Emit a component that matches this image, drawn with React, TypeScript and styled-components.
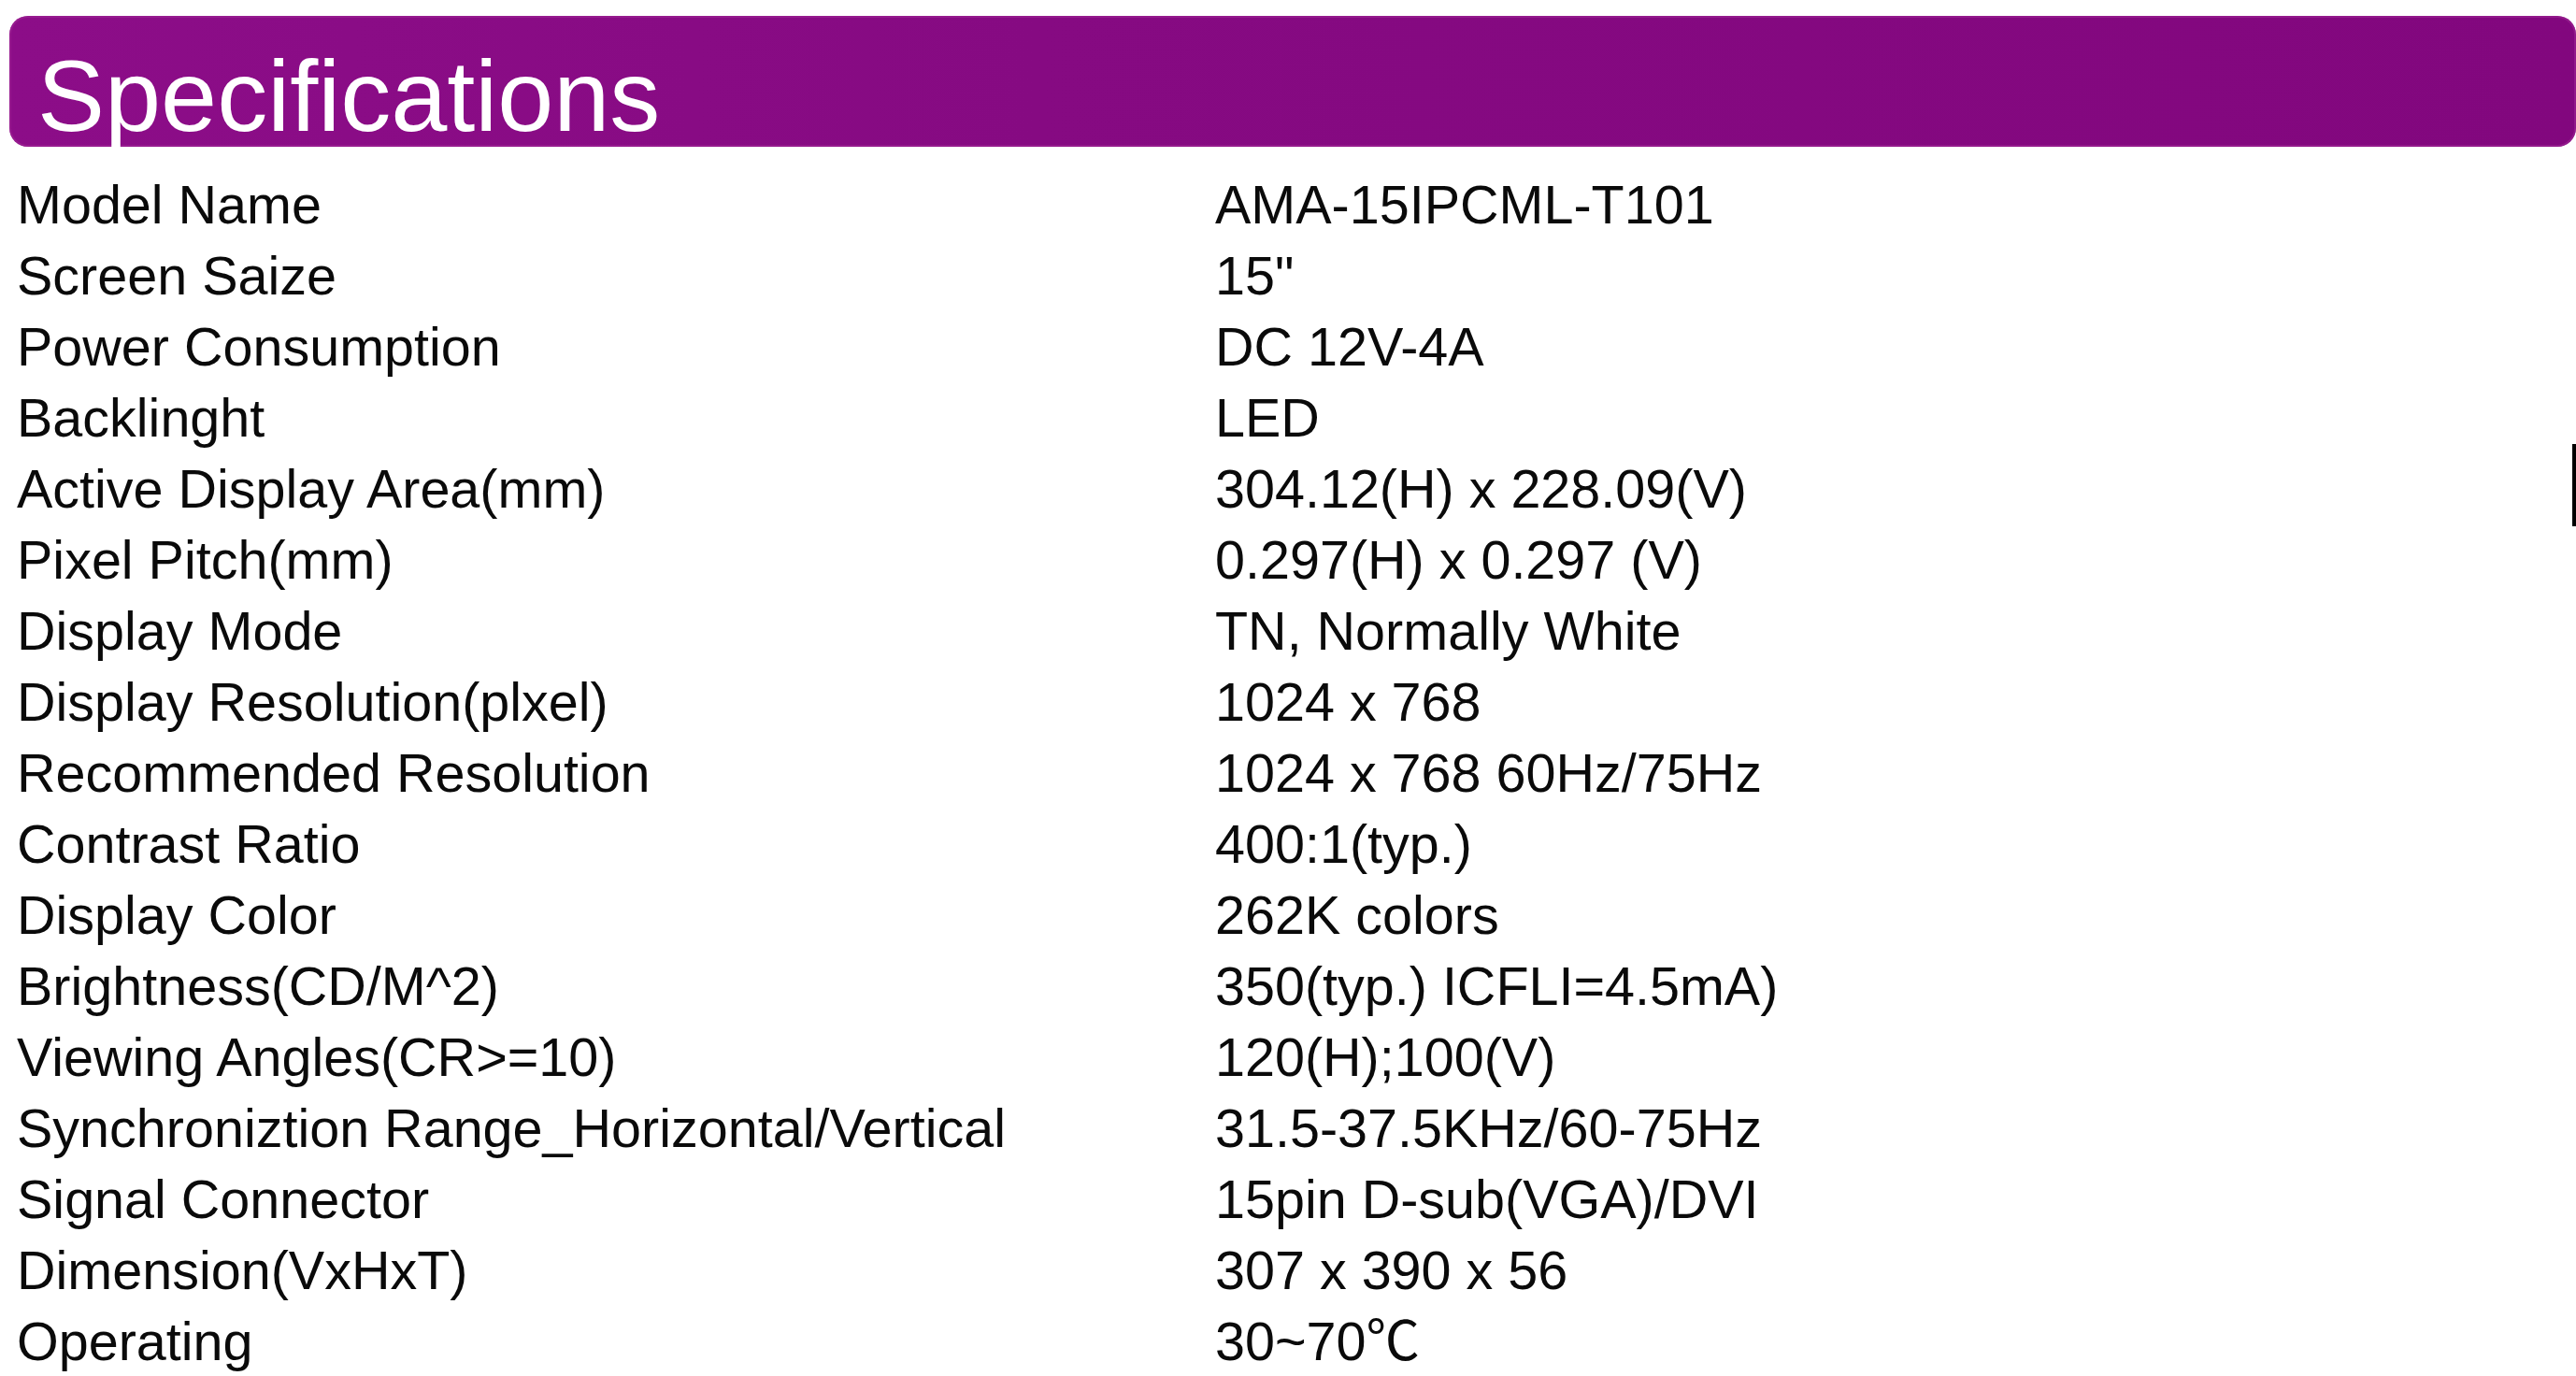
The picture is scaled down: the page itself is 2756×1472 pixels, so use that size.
import React from "react";
import styled, { createGlobalStyle } from "styled-components";

const GlobalStyle = createGlobalStyle`
  html, body {
    margin: 0;
    padding: 0;
    background: #ffffff;
  }
  body {
    font-family: "Liberation Sans", Arial, "Noto Sans CJK SC", sans-serif;
    color: #0a0a0a;
  }
`;

const Page = styled.div`
  position: relative;
  width: 2756px;
  height: 1472px;
  overflow: hidden;
  box-sizing: border-box;
  padding-top: 17px;
  background: #ffffff;
`;

const HeaderBar = styled.div`
  box-sizing: border-box;
  margin-left: 10px;
  height: 140px;
  padding: 32px 0 0 30px;
  border-radius: 20px;
  background: linear-gradient(90deg, #8c0d88 0%, #860a82 40%, #82077e 100%);
  box-shadow: inset 0 0 0 2px rgba(160, 40, 150, 0.55);
`;

const Title = styled.h1`
  margin: 0;
  font-family: "Liberation Sans", Arial, sans-serif;
  font-weight: 400;
  font-size: 108px;
  line-height: 108px;
  color: #ffffff;
  letter-spacing: 0;
`;

const SpecList = styled.dl`
  margin: 24px 0 0 0;
  padding: 0 0 0 18px;
  display: grid;
  grid-template-columns: 1282px 1fr;
  font-family: "Liberation Sans", Arial, "Noto Sans CJK SC", sans-serif;
  font-size: 57.5px;
  line-height: 76px;
  color: #0a0a0a;
`;

const Label = styled.dt`
  margin: 0;
  white-space: nowrap;
`;

const Value = styled.dd`
  margin: 0;
  white-space: nowrap;
`;

const EdgeMark = styled.div`
  position: absolute;
  right: 0;
  top: 475px;
  width: 4px;
  height: 88px;
  background: #000000;
`;

const specs: [string, string][] = [
  ["Model Name", "AMA-15IPCML-T101"],
  ["Screen Saize", "15\""],
  ["Power Consumption", "DC 12V-4A"],
  ["Backlinght", "LED"],
  ["Active Display Area(mm)", "304.12(H) x 228.09(V)"],
  ["Pixel Pitch(mm)", "0.297(H) x 0.297 (V)"],
  ["Display Mode", "TN, Normally White"],
  ["Display Resolution(plxel)", "1024 x 768"],
  ["Recommended Resolution", "1024 x 768 60Hz/75Hz"],
  ["Contrast Ratio", "400:1(typ.)"],
  ["Display Color", "262K colors"],
  ["Brightness(CD/M^2)", "350(typ.) ICFLI=4.5mA)"],
  ["Viewing Angles(CR>=10)", "120(H);100(V)"],
  ["Synchroniztion Range_Horizontal/Vertical", "31.5-37.5KHz/60-75Hz"],
  ["Signal Connector", "15pin D-sub(VGA)/DVI"],
  ["Dimension(VxHxT)", "307 x 390 x 56"],
  ["Operating", "30~70\u2103"],
];

export default function App() {
  return (
    <>
      <GlobalStyle />
      <Page>
        <HeaderBar>
          <Title>Specifications</Title>
        </HeaderBar>
        <SpecList>
          {specs.map(([label, value]) => (
            <React.Fragment key={label}>
              <Label>{label}</Label>
              <Value>{value}</Value>
            </React.Fragment>
          ))}
        </SpecList>
        <EdgeMark />
      </Page>
    </>
  );
}
